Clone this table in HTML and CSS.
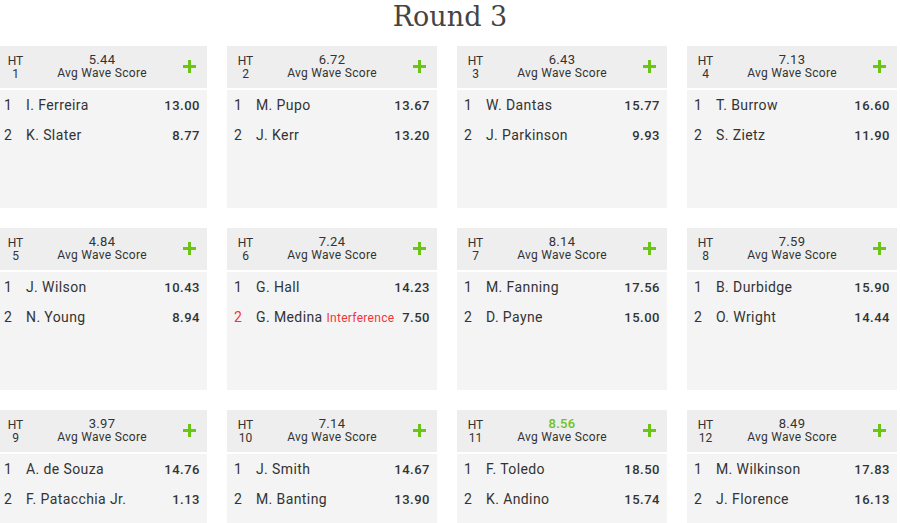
FILE: index.html
```html
<!DOCTYPE html>
<html>
<head>
<meta charset="utf-8">
<link rel="stylesheet" href="styles.css">
</head>
<body>
<h1 class="title">Round 3</h1>
<div class="grid">
  <div class="heat">
    <div class="heat-head"><div class="ht"><span>HT</span><span>1</span></div><div class="avg"><span class="avg-num">5.44</span><span class="avg-label">Avg Wave Score</span></div><span class="plus"></span></div>
    <div class="heat-body">
      <div class="row"><span class="rank">1</span><span class="name">I. Ferreira</span><span class="score">13.00</span></div>
      <div class="row"><span class="rank">2</span><span class="name">K. Slater</span><span class="score">8.77</span></div>
    </div>
  </div>
  <div class="heat">
    <div class="heat-head"><div class="ht"><span>HT</span><span>2</span></div><div class="avg"><span class="avg-num">6.72</span><span class="avg-label">Avg Wave Score</span></div><span class="plus"></span></div>
    <div class="heat-body">
      <div class="row"><span class="rank">1</span><span class="name">M. Pupo</span><span class="score">13.67</span></div>
      <div class="row"><span class="rank">2</span><span class="name">J. Kerr</span><span class="score">13.20</span></div>
    </div>
  </div>
  <div class="heat">
    <div class="heat-head"><div class="ht"><span>HT</span><span>3</span></div><div class="avg"><span class="avg-num">6.43</span><span class="avg-label">Avg Wave Score</span></div><span class="plus"></span></div>
    <div class="heat-body">
      <div class="row"><span class="rank">1</span><span class="name">W. Dantas</span><span class="score">15.77</span></div>
      <div class="row"><span class="rank">2</span><span class="name">J. Parkinson</span><span class="score">9.93</span></div>
    </div>
  </div>
  <div class="heat">
    <div class="heat-head"><div class="ht"><span>HT</span><span>4</span></div><div class="avg"><span class="avg-num">7.13</span><span class="avg-label">Avg Wave Score</span></div><span class="plus"></span></div>
    <div class="heat-body">
      <div class="row"><span class="rank">1</span><span class="name">T. Burrow</span><span class="score">16.60</span></div>
      <div class="row"><span class="rank">2</span><span class="name">S. Zietz</span><span class="score">11.90</span></div>
    </div>
  </div>
  <div class="heat">
    <div class="heat-head"><div class="ht"><span>HT</span><span>5</span></div><div class="avg"><span class="avg-num">4.84</span><span class="avg-label">Avg Wave Score</span></div><span class="plus"></span></div>
    <div class="heat-body">
      <div class="row"><span class="rank">1</span><span class="name">J. Wilson</span><span class="score">10.43</span></div>
      <div class="row"><span class="rank">2</span><span class="name">N. Young</span><span class="score">8.94</span></div>
    </div>
  </div>
  <div class="heat">
    <div class="heat-head"><div class="ht"><span>HT</span><span>6</span></div><div class="avg"><span class="avg-num">7.24</span><span class="avg-label">Avg Wave Score</span></div><span class="plus"></span></div>
    <div class="heat-body">
      <div class="row"><span class="rank">1</span><span class="name">G. Hall</span><span class="score">14.23</span></div>
      <div class="row"><span class="rank penalty">2</span><span class="name">G. Medina <span class="note">Interference</span></span><span class="score">7.50</span></div>
    </div>
  </div>
  <div class="heat">
    <div class="heat-head"><div class="ht"><span>HT</span><span>7</span></div><div class="avg"><span class="avg-num">8.14</span><span class="avg-label">Avg Wave Score</span></div><span class="plus"></span></div>
    <div class="heat-body">
      <div class="row"><span class="rank">1</span><span class="name">M. Fanning</span><span class="score">17.56</span></div>
      <div class="row"><span class="rank">2</span><span class="name">D. Payne</span><span class="score">15.00</span></div>
    </div>
  </div>
  <div class="heat">
    <div class="heat-head"><div class="ht"><span>HT</span><span>8</span></div><div class="avg"><span class="avg-num">7.59</span><span class="avg-label">Avg Wave Score</span></div><span class="plus"></span></div>
    <div class="heat-body">
      <div class="row"><span class="rank">1</span><span class="name">B. Durbidge</span><span class="score">15.90</span></div>
      <div class="row"><span class="rank">2</span><span class="name">O. Wright</span><span class="score">14.44</span></div>
    </div>
  </div>
  <div class="heat">
    <div class="heat-head"><div class="ht"><span>HT</span><span>9</span></div><div class="avg"><span class="avg-num">3.97</span><span class="avg-label">Avg Wave Score</span></div><span class="plus"></span></div>
    <div class="heat-body">
      <div class="row"><span class="rank">1</span><span class="name">A. de Souza</span><span class="score">14.76</span></div>
      <div class="row"><span class="rank">2</span><span class="name">F. Patacchia Jr.</span><span class="score">1.13</span></div>
    </div>
  </div>
  <div class="heat">
    <div class="heat-head"><div class="ht"><span>HT</span><span>10</span></div><div class="avg"><span class="avg-num">7.14</span><span class="avg-label">Avg Wave Score</span></div><span class="plus"></span></div>
    <div class="heat-body">
      <div class="row"><span class="rank">1</span><span class="name">J. Smith</span><span class="score">14.67</span></div>
      <div class="row"><span class="rank">2</span><span class="name">M. Banting</span><span class="score">13.90</span></div>
    </div>
  </div>
  <div class="heat">
    <div class="heat-head"><div class="ht"><span>HT</span><span>11</span></div><div class="avg"><span class="avg-num best">8.56</span><span class="avg-label">Avg Wave Score</span></div><span class="plus"></span></div>
    <div class="heat-body">
      <div class="row"><span class="rank">1</span><span class="name">F. Toledo</span><span class="score">18.50</span></div>
      <div class="row"><span class="rank">2</span><span class="name">K. Andino</span><span class="score">15.74</span></div>
    </div>
  </div>
  <div class="heat">
    <div class="heat-head"><div class="ht"><span>HT</span><span>12</span></div><div class="avg"><span class="avg-num">8.49</span><span class="avg-label">Avg Wave Score</span></div><span class="plus"></span></div>
    <div class="heat-body">
      <div class="row"><span class="rank">1</span><span class="name">M. Wilkinson</span><span class="score">17.83</span></div>
      <div class="row"><span class="rank">2</span><span class="name">J. Florence</span><span class="score">16.13</span></div>
    </div>
  </div>
</div>
</body>
</html>
```

FILE: styles.css
```css
html, body {
  margin: 0;
  padding: 0;
  background: #fff;
  overflow: hidden;
}
body {
  font-family: Roboto, "Liberation Sans", sans-serif;
  color: #333;
}
.title {
  margin: 0;
  height: 46px;
  text-align: center;
  font-family: "DejaVu Serif", serif;
  font-weight: normal;
  font-size: 27px;
  line-height: 34px;
  color: #444;
}
.grid {
  display: grid;
  grid-template-columns: repeat(4, 210px);
  column-gap: 20px;
  row-gap: 20px;
  margin-left: -3px;
  width: 900px;
}
.heat {
  background: #f4f4f4;
  height: 162px;
  display: flex;
  flex-direction: column;
}
.heat-head {
  background: #eeeeee;
  height: 42px;
  border-bottom: 2px solid #fff;
  display: flex;
  align-items: center;
  padding: 0 11px 0 9px;
  position: relative;
}
.ht {
  display: flex;
  flex-direction: column;
  align-items: center;
  font-size: 12px;
  line-height: 13px;
  width: 19px;
  color: #333;
  padding-top: 1px;
}
.avg {
  position: absolute;
  left: 0;
  right: 0;
  top: 7px;
  display: flex;
  flex-direction: column;
  align-items: center;
  pointer-events: none;
}
.avg-num {
  font-size: 13px;
  line-height: 13px;
  letter-spacing: 0.3px;
  color: #333;
}
.avg-num.best {
  color: #6cc417;
  font-weight: 500;
}
.avg-label {
  font-size: 12px;
  line-height: 14px;
  letter-spacing: 0.3px;
  color: #333;
}
.plus {
  margin-left: auto;
  width: 13px;
  height: 13px;
  position: relative;
  top: -1px;
}
.plus::before, .plus::after {
  content: "";
  position: absolute;
  background: #6cc417;
}
.plus::before {
  left: 5px;
  top: 0;
  width: 3px;
  height: 13px;
}
.plus::after {
  left: 0;
  top: 5px;
  width: 13px;
  height: 3px;
}
.heat-body {
  display: flex;
  flex-direction: column;
}
.row {
  height: 30px;
  display: flex;
  align-items: center;
  padding: 0 7px 0 6px;
  font-size: 14px;
  letter-spacing: 0.4px;
}
.rank {
  width: 22px;
  padding-left: 1px;
}
.rank.penalty, .note {
  color: #f0353b;
}
.name {
  flex: 1;
}
.note {
  font-size: 12px;
  letter-spacing: 0.3px;
}
.score {
  font-weight: 500;
  font-size: 13px;
  letter-spacing: 0.5px;
}
```
